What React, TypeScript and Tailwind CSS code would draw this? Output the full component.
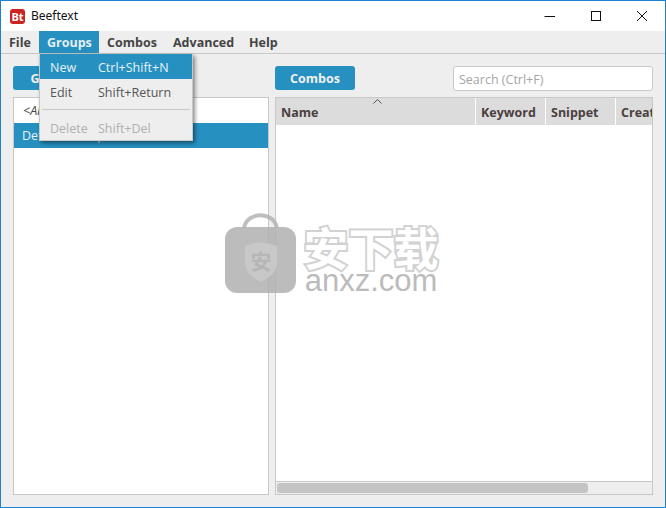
const font = "font-['Open_Sans','Noto_Sans_CJK_SC',sans-serif]";

function MenuBarItem({ label, className, active }: { label: string; className: string; active?: boolean }) {
  return (
    <div
      className={`flex h-[22px] shrink-0 items-center pl-[8px] pt-[3px] text-[12.5px] font-bold ${className} ${
        active ? "bg-[#2690c0] text-[#e4eef3]" : "text-[#444444]"
      }`}
    >
      {label}
    </div>
  );
}

function HeaderCell({ label, className }: { label: string; className: string }) {
  return (
    <div className={`flex h-full shrink-0 items-center overflow-hidden whitespace-nowrap border-r border-white pl-[5px] pt-[3px] text-[12.5px] font-bold text-[#4a4040] ${className}`}>
      {label}
    </div>
  );
}

function DropItem({ label, keys, active, disabled }: { label: string; keys: string; active?: boolean; disabled?: boolean }) {
  const color = active ? "bg-[#2690c0] text-[#e8f2f7]" : disabled ? "text-[#b0b0b0]" : "text-[#555555]";
  return (
    <div className={`flex h-[25px] items-center pt-[3px] text-[12.5px] ${color}`}>
      <span className="w-[58px] pl-[10px]">{label}</span>
      <span>{keys}</span>
    </div>
  );
}

function Watermark() {
  return (
    <div className="pointer-events-none absolute left-[224px] top-[211px] flex items-start gap-[6px]">
      <svg width="71" height="81" viewBox="0 0 71 81">
        <path d="M19 16 C22 -1 49 -1 52 16" fill="none" stroke="#b4b4b4" strokeOpacity="0.85" strokeWidth="4" />
        <rect x="0" y="15" width="71" height="66" rx="12" fill="#b0b0b0" fillOpacity="0.85" />
        <path d="M20 34 Q36 27 52 34 V53 Q50 63 36 70 Q22 63 20 53 Z" fill="#c8c8c8" />
        <text x="36" y="57" textAnchor="middle" fontSize="21" fontWeight="700" fill="#b6b6b6" fontFamily="'Noto Sans CJK SC', sans-serif">
          安
        </text>
      </svg>
      <div className="flex w-[138px] flex-col items-center pt-[12px]">
        <div className="h-[46px] whitespace-nowrap font-['Noto_Sans_CJK_SC',sans-serif] text-[45px] font-bold leading-[46px] text-white [-webkit-text-stroke:4px_#d2d2d2] [paint-order:stroke_fill]">
          安下载
        </div>
        <div className="-mt-[1px] whitespace-nowrap font-['Liberation_Sans',sans-serif] text-[31px] leading-[24px] text-[#bbbbbb]">
          anxz.com
        </div>
      </div>
    </div>
  );
}

export default function App() {
  return (
    <div className={`relative flex h-[508px] w-[666px] flex-col overflow-hidden border border-[#1b82d1] bg-[#eeeeee] ${font}`}>
      {/* title bar */}
      <div className="flex h-[30px] shrink-0 items-center bg-white">
        <div className="ml-[9px] flex h-[15px] w-[15px] items-center justify-center rounded-[3px] bg-[#cc2420] text-[11px] font-bold leading-none text-white">
          Bt
        </div>
        <span className="ml-[6px] text-[12px] text-[#111111] font-['Noto_Sans',sans-serif]">Beeftext</span>
        <div className="ml-auto flex items-center">
          <svg width="46" height="30" viewBox="0 0 46 30">
            <path d="M17.5 15.5 H28" stroke="#111" strokeWidth="1" />
          </svg>
          <svg width="46" height="30" viewBox="0 0 46 30">
            <rect x="18.5" y="10.5" width="9" height="9" fill="none" stroke="#111" strokeWidth="1" />
          </svg>
          <svg width="46" height="30" viewBox="0 0 46 30">
            <path d="M18 10 L28 20 M28 10 L18 20" stroke="#111" strokeWidth="1" />
          </svg>
        </div>
      </div>

      {/* menu bar */}
      <div className="flex h-[23px] shrink-0 items-start border-b border-[#c8c8c8]">
        <MenuBarItem label="File" className="w-[38px]" />
        <MenuBarItem label="Groups" className="w-[60px]" active />
        <MenuBarItem label="Combos" className="w-[66px]" />
        <MenuBarItem label="Advanced" className="w-[76px]" />
        <MenuBarItem label="Help" className="w-[46px]" />
      </div>

      {/* body */}
      <div className="flex min-h-0 flex-1 gap-[6px] p-[12px]">
        <div className="flex w-[256px] shrink-0 flex-col">
          <div className="flex h-[24px] w-[80px] items-center justify-center rounded-[3px] bg-[#2690c0] pt-[2px] text-[12.5px] font-bold text-[#f0f0f0]">
            Groups
          </div>
          <div className="mt-[7px] flex-1 border border-[#c8c8c8] bg-white">
            <div className="flex h-[25px] items-center pl-[9px] pt-[2px] text-[12.5px] italic text-[#444444]">&lt;All Combos&gt;</div>
            <div className="flex h-[25px] items-center bg-[#2690c0] pl-[8px] pt-[2px] text-[12.5px] text-[#e8f2f7]">Default Group</div>
          </div>
        </div>

        <div className="flex min-w-0 flex-1 flex-col">
          <div className="flex h-[24px] items-center justify-between">
            <div className="flex h-[24px] w-[80px] items-center justify-center rounded-[3px] bg-[#2690c0] pt-[2px] text-[12.5px] font-bold text-[#f0f0f0]">
              Combos
            </div>
            <div className="mt-[1px] flex h-[25px] w-[200px] items-center rounded-[3px] border border-[#c8c8c8] bg-white pl-[5px] pt-[3px] text-[12.5px] text-[#a5a5a5]">
              Search (Ctrl+F)
            </div>
          </div>
          <div className="mt-[7px] flex min-h-0 flex-1 flex-col border border-[#c8c8c8] bg-white">
            <div className="relative flex h-[27px] shrink-0 bg-[#dcdcdc]">
              <HeaderCell label="Name" className="w-[200px]" />
              <HeaderCell label="Keyword" className="w-[70px]" />
              <HeaderCell label="Snippet" className="w-[70px]" />
              <HeaderCell label="Created" className="w-[36px] border-r-0" />
              <svg width="9" height="5" viewBox="0 0 9 5" className="absolute left-[97px] top-[1px]">
                <path d="M0.5 4.5 L4.5 0.5 L8.5 4.5" fill="none" stroke="#555" strokeWidth="1" />
              </svg>
            </div>
            <div className="flex-1" />
            <div className="flex h-[13px] shrink-0 items-center border-t border-[#c8c8c8] bg-[#eeeeee] pl-[1px]">
              <div className="h-[10px] w-[311px] rounded-[3px] bg-[#c4c4c4]" />
            </div>
          </div>
        </div>
      </div>

      {/* groups menu */}
      <div className="absolute left-[38px] top-[53px] w-[154px] border-x border-b border-[#c8c8c8] bg-[#eeeeee] shadow-[2px_2px_4px_rgba(0,0,0,0.45)]">
        <DropItem label="New" keys="Ctrl+Shift+N" active />
        <DropItem label="Edit" keys="Shift+Return" />
        <div className="flex h-[11px] items-center px-[2px]">
          <div className="h-px w-full bg-[#c8c8c8]" />
        </div>
        <DropItem label="Delete" keys="Shift+Del" disabled />
      </div>

      <Watermark />
    </div>
  );
}
